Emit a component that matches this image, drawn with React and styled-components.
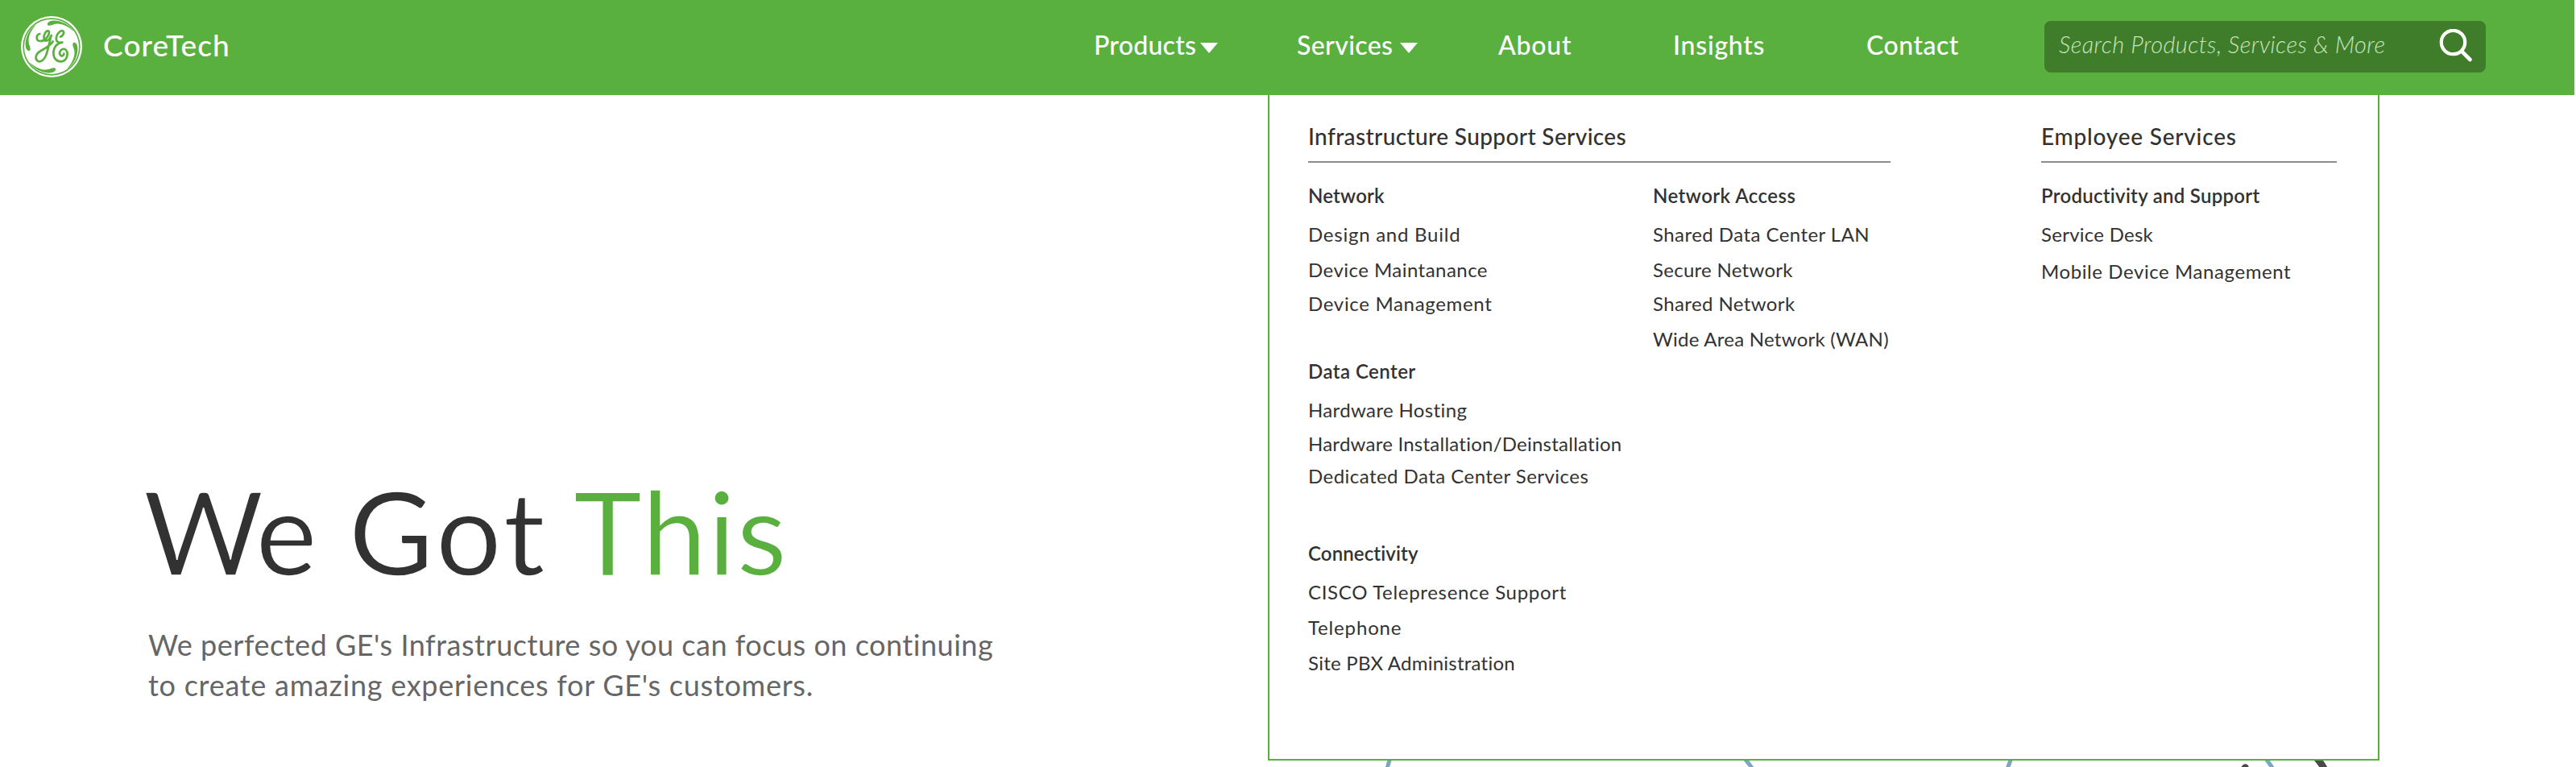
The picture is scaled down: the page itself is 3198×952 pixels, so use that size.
import React from "react";
import styled, { createGlobalStyle } from "styled-components";

const green = "#5ab03f";
const ink = "#323232";

const GlobalStyle = createGlobalStyle`
  * { box-sizing: border-box; }
  body { margin: 0; background: #fff; font-family: Lato, "Open Sans", sans-serif; color: ${ink}; overflow: hidden; }
  h1, h2, h3, p, ul { margin: 0; padding: 0; font-weight: inherit; font-size: inherit; }
  ul { list-style: none; }
`;

const Page = styled.div`
  width: 3198px;
  height: 952px;
  overflow: hidden;
`;

const Header = styled.header`
  position: relative;
  display: flex;
  align-items: center;
  width: 3196px;
  height: 118px;
  padding: 0 0 2px 26px;
  background: ${green};
  color: #fff;
`;

const Brand = styled.div`
  display: flex;
  align-items: center;
  gap: 26px;
  width: 1332px;
`;

const BrandName = styled.span`
  font-size: 37px;
  font-weight: 500;
  line-height: 45px;
  letter-spacing: 1.1px;
  padding-bottom: 5px;
`;

const Nav = styled.nav`
  display: grid;
  grid-template-columns: 252px 250px 217px 240px 221px;
`;

const NavLink = styled.a`
  display: flex;
  align-items: center;
  gap: ${(p) => p.$gap || 0}px;
  font-size: 32px;
  font-weight: 500;
  line-height: 39px;
  letter-spacing: ${(p) => p.$tracking}px;
  padding-bottom: 5px;
`;

const Caret = styled.svg`
  display: block;
  width: 22px;
  height: 13px;
  margin-top: 7px;
`;

const SearchBox = styled.div`
  display: flex;
  align-items: center;
  justify-content: space-between;
  width: 548px;
  height: 64px;
  padding: 0 16px 0 18px;
  border-radius: 8px;
  background: #3f7d2b;
`;

const Placeholder = styled.span`
  font-size: 29px;
  font-style: italic;
  font-weight: 300;
  line-height: 35px;
  letter-spacing: 0.39px;
  padding-bottom: 7px;
  color: #c6e4bc;
`;

const Menu = styled.div`
  position: absolute;
  z-index: 2;
  top: 118px;
  left: 1574px;
  width: 1380px;
  height: 826px;
  display: flex;
  gap: 187px;
  padding: 34px 0 0 48px;
  border: 2px solid ${green};
  border-top: 0;
  background: #fff;
  color: ${ink};
`;

const Section = styled.section`
  width: ${(p) => p.$width}px;
`;

const SectionTitle = styled.h2`
  font-size: 28px;
  font-weight: 500;
  line-height: 34px;
  letter-spacing: ${(p) => p.$tracking}px;
  padding-bottom: 14px;
  border-bottom: 2px solid #8c8c8c;
  margin-bottom: 26px;
`;

const Columns = styled.div`
  display: grid;
  grid-template-columns: 428px auto;
`;

const Group = styled.div`
  margin-top: ${(p) => p.$before || 0}px;
  font-size: 24px;
  line-height: 30px;
  white-space: nowrap;
`;

const GroupTitle = styled.h3`
  font-weight: 600;
  letter-spacing: ${(p) => p.$tracking}px;
`;

const MenuItem = styled.li`
  margin-top: ${(p) => p.$before}px;
  letter-spacing: ${(p) => p.$tracking}px;
`;

const Hero = styled.main`
  display: flex;
  height: 834px;
`;

const Copy = styled.div`
  width: 1700px;
  padding: 455px 0 0 178px;
`;

const Headline = styled.h1`
  display: grid;
  grid-template-columns: 255px 279px auto;
  font-size: 144px;
  line-height: 172px;
  -webkit-text-stroke: 1.5px #fff;
`;

const Word = styled.span`
  letter-spacing: ${(p) => p.$tracking}px;
  color: ${(p) => (p.$accent ? green : ink)};
`;

const Lead = styled.p`
  margin: 30px 0 0 6px;
  font-size: 36px;
  line-height: 50px;
  color: #666;
  white-space: nowrap;
`;

const LeadLine = styled.span`
  display: block;
  letter-spacing: ${(p) => p.$tracking}px;
`;

const Illustration = styled.svg`
  display: block;
  width: 1240px;
  height: 834px;
`;

const infrastructureLeft = [
  { title: "Network", tracking: 0.2, items: [["Design and Build", 18, 0.75], ["Device Maintanance", 14, 0.46], ["Device Management", 12, 0.67]] },
  { title: "Data Center", tracking: 0.45, before: 54, items: [["Hardware Hosting", 18, 0.36], ["Hardware Installation/Deinstallation", 12, 0.24], ["Dedicated Data Center Services", 10, 0.46]] },
  { title: "Connectivity", tracking: 0.12, before: 66, items: [["CISCO Telepresence Support", 18, 0.68], ["Telephone", 14, 0.84], ["Site PBX Administration", 14, 0.24]] },
];

const infrastructureRight = [
  { title: "Network Access", tracking: 0.45, items: [["Shared Data Center LAN", 18, 0.45], ["Secure Network", 14, 0.28], ["Shared Network", 12, 0.4], ["Wide Area Network (WAN)", 14, 0.26]] },
];

const employee = [
  { title: "Productivity and Support", tracking: 0.28, items: [["Service Desk", 18, 0.26], ["Mobile Device Management", 16, 0.58]] },
];

function Groups({ groups }) {
  return (
    <div>
      {groups.map((g) => (
        <Group key={g.title} $before={g.before}>
          <GroupTitle $tracking={g.tracking}>{g.title}</GroupTitle>
          <ul>
            {g.items.map(([label, before, tracking]) => (
              <MenuItem key={label} $before={before} $tracking={tracking}>{label}</MenuItem>
            ))}
          </ul>
        </Group>
      ))}
    </div>
  );
}

function DownCaret() {
  return (
    <Caret viewBox="0 0 22 13">
      <path d="M0 0H22L11 13Z" fill="#fff" />
    </Caret>
  );
}

function Monogram() {
  const swoosh = "M-10-79C-19-80-18-94 2-97C36-99 66-82 84-56C62-76 38-88 15-85C4-83-2-78-10-79Z";
  return (
    <svg width="76" height="76" viewBox="-114 -114 228 228">
      <circle r="114" fill="#fff" />
      <circle r="104.500" fill="none" stroke={green} strokeWidth="5" />
      {[0, 90, 180, 270].map((a) => (
        <path key={a} d={swoosh} fill={green} transform={`rotate(${a})`} />
      ))}
      <g fill="none" stroke={green} strokeWidth="8" strokeLinecap="round" strokeLinejoin="round" transform="translate(-192 -174)">
        <path d="M148 126C134 129 132 151 149 153C167 154 183 133 183 120C183 112 173 114 168 123C161 136 162 152 171 152C180 152 187 141 191 132C184 158 179 186 171 207C164 224 151 232 142 228C129 222 132 203 146 193C163 182 187 172 197 154" />
        <path d="M225 137C235 134 241 121 235 116C228 111 213 122 210 138C207 153 215 161 232 158C212 160 199 176 199 197C199 217 211 229 226 229C241 229 251 216 251 201C251 187 242 180 233 183C222 187 218 202 227 207C233 210 238 206 238 200" />
      </g>
    </svg>
  );
}

function SearchIcon() {
  return (
    <svg width="42" height="44" viewBox="0 0 42 44" fill="none" stroke="#fff" strokeLinecap="round">
      <circle cx="17.500" cy="16.500" r="14.700" strokeWidth="4.200" />
      <path d="M28.500 28L38.500 38" strokeWidth="4.600" />
    </svg>
  );
}

export default function App() {
  return (
    <Page>
      <GlobalStyle />
      <Header>
        <Brand>
          <Monogram />
          <BrandName>CoreTech</BrandName>
        </Brand>
        <Nav>
          <NavLink $tracking={0.26} $gap={5}>Products<DownCaret /></NavLink>
          <NavLink $tracking={0.38} $gap={9}>Services<DownCaret /></NavLink>
          <NavLink $tracking={0.79}>About</NavLink>
          <NavLink $tracking={0.74}>Insights</NavLink>
          <NavLink $tracking={0.5}>Contact</NavLink>
        </Nav>
        <SearchBox>
          <Placeholder>Search Products, Services &amp; More</Placeholder>
          <SearchIcon />
        </SearchBox>
        <Menu>
          <Section $width={723}>
            <SectionTitle $tracking={0.38}>Infrastructure Support Services</SectionTitle>
            <Columns>
              <Groups groups={infrastructureLeft} />
              <Groups groups={infrastructureRight} />
            </Columns>
          </Section>
          <Section $width={367}>
            <SectionTitle $tracking={0.78}>Employee Services</SectionTitle>
            <Groups groups={employee} />
          </Section>
        </Menu>
      </Header>
      <Hero>
        <Copy>
          <Headline>
            <Word $tracking={-1.5}>We </Word>
            <Word $tracking={3.6}>Got </Word>
            <Word $tracking={1.3} $accent>This</Word>
          </Headline>
          <Lead>
            <LeadLine $tracking={0.52}>We perfected GE's Infrastructure so you can focus on continuing</LeadLine>
            <LeadLine $tracking={0.73}>to create amazing experiences for GE's customers.</LeadLine>
          </Lead>
        </Copy>
        <Illustration viewBox="1700 118 1240 834" fill="none">
          <g stroke="#7ba6c4" strokeWidth="5">
            <path d="M1727 938Q1724 946 1721.500 956" />
            <path d="M2163 938Q2170 946 2177 956" />
            <path d="M2498.500 938Q2494.500 947 2491.500 956" />
            <path d="M2810 938Q2816 945 2823 956" />
          </g>
          <g stroke="#4a4a4a" strokeWidth="8.500" strokeLinecap="round">
            <path d="M2787.500 952.500L2783 958" />
            <path d="M2872 937Q2881 945 2887 957" />
          </g>
        </Illustration>
      </Hero>
    </Page>
  );
}
